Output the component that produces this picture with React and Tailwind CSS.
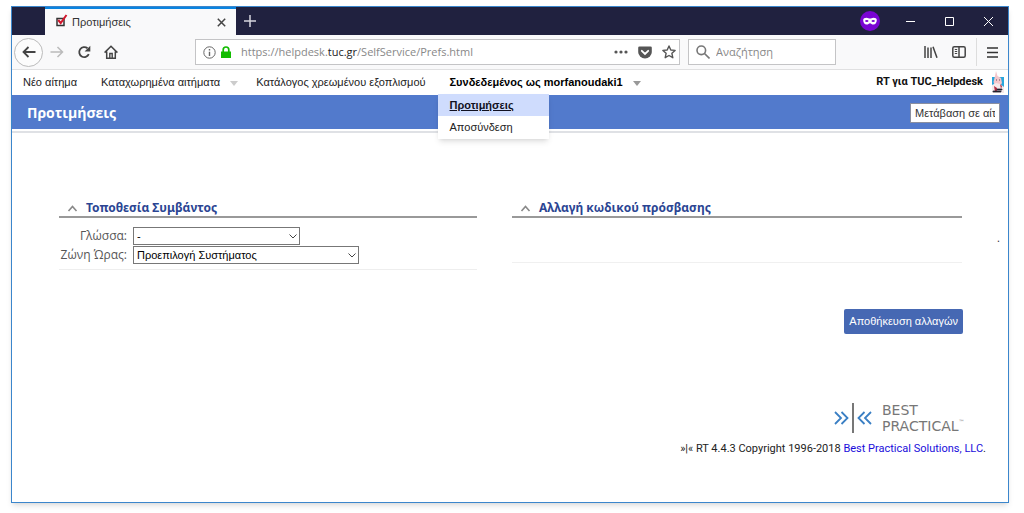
import React, { useState } from "react";

function NavItem({ children, arrow, bold }) {
  return (
    <a
      href="#"
      className={
        bold
          ? "flex items-center gap-2.5 font-bold text-black"
          : "flex items-center gap-2.5 text-[#222]"
      }
    >
      {children}
      {arrow && (
        <svg
          viewBox="0 0 8 5"
          className={bold ? "mt-0.5 h-[5px] w-2 fill-[#999]" : "mt-0.5 h-[5px] w-2 fill-[#ccc]"}
        >
          <path d="M0 0h8L4 5z" />
        </svg>
      )}
    </a>
  );
}

function Panel({ title, children, className }) {
  return (
    <section className={className}>
      <h2 className="flex h-[18px] items-center gap-2 border-b-2 border-[#999] pl-2 font-['Noto_Sans'] text-xs font-bold text-[#2b4593]">
        <svg viewBox="0 0 11 7" className="h-[7px] w-[11px]" fill="none" stroke="#888" strokeWidth="1.600">
          <path d="M1.500 6l4-4.500 4 4.500" />
        </svg>
        {title}
      </h2>
      {children}
    </section>
  );
}

function SelectRow({ id, label, option, width }) {
  return (
    <div className="flex h-[19px] items-center gap-1.5">
      <label
        htmlFor={id}
        className="w-[68px] text-right text-xs whitespace-nowrap text-[#555]"
      >
        {label}
      </label>
      <div className={`relative ${width}`}>
        <select
          id={id}
          className="block h-[18px] w-full appearance-none border border-[#777] bg-white pl-[3px] font-['Liberation_Sans'] text-[11px] leading-4 text-black"
        >
          <option>{option}</option>
        </select>
        <svg
          viewBox="0 0 8 5"
          className="pointer-events-none absolute top-[7px] right-[3px] h-[5px] w-2"
          fill="none"
          stroke="#444"
        >
          <path d="M.5.5L4 4 7.500.5" />
        </svg>
      </div>
    </div>
  );
}

function TabBar() {
  return (
    <div className="flex h-7 items-stretch bg-[#20213f] pl-[33px]">
      <div className="flex w-[191px] items-center border-t-2 border-[#0a84e0] bg-[#f9f9fa] pr-2.5 pl-2.5 font-['Liberation_Sans'] text-[11px] text-[#333]">
        <svg viewBox="0 0 13 13" className="mr-1 mb-1 h-[13px] w-[13px]" fill="none">
          <path d="M2 4.500h7v7H2z" stroke="#333" strokeWidth="1.500" />
          <path d="M3.200 6l2.500 3L11.500 1" stroke="#d2172d" strokeWidth="2" />
        </svg>
        <span className="flex-1">Προτιμήσεις</span>
        <button aria-label="Close tab">
          <svg viewBox="0 0 9 9" className="h-[9px] w-[9px]" stroke="#444" strokeWidth="1.500">
            <path d="M.8.8l7.400 7.400M8.200.8L.8 8.200" />
          </svg>
        </button>
      </div>
      <button aria-label="New tab" className="ml-2">
        <svg viewBox="0 0 12 12" className="h-3 w-3" stroke="#d5d5de" strokeWidth="1.500">
          <path d="M6 0v12M0 6h12" />
        </svg>
      </button>
      <div className="ml-auto flex items-center gap-[30px] pr-[15px]">
        <svg viewBox="0 0 20 20" className="-mr-1 h-5 w-5">
          <circle cx="10" cy="10" r="10" fill="#7a05d3" />
          <path
            d="M3.200 9c0-1.500 1.500-2.200 3.300-2.200 1.600 0 2.400.8 3.500.8s1.900-.8 3.500-.8c1.800 0 3.300.7 3.300 2.200 0 2.700-1.300 4.600-3.400 4.600-1.800 0-2.200-1.400-3.400-1.400s-1.600 1.400-3.400 1.400C4.500 13.600 3.200 11.700 3.200 9z"
            fill="#fff"
          />
          <ellipse cx="6.800" cy="10" rx="1.700" ry="1" fill="#7a05d3" />
          <ellipse cx="13.200" cy="10" rx="1.700" ry="1" fill="#7a05d3" />
        </svg>
        <button aria-label="Minimize">
          <svg viewBox="0 0 9 9" className="h-[9px] w-[9px]" stroke="#fff">
            <path d="M0 4.500h9" />
          </svg>
        </button>
        <button aria-label="Maximize">
          <svg viewBox="0 0 9 9" className="h-[9px] w-[9px]" stroke="#fff" fill="none">
            <path d="M.5.5h8v8h-8z" />
          </svg>
        </button>
        <button aria-label="Close">
          <svg viewBox="0 0 9 9" className="h-[9px] w-[9px]" stroke="#fff">
            <path d="M0 0l9 9M9 0L0 9" />
          </svg>
        </button>
      </div>
    </div>
  );
}

function Toolbar() {
  const [search, setSearch] = useState("");

  return (
    <div className="flex h-[35px] items-center border-b border-[#e0e0e1] bg-[#f9f9fa] pr-2.5 pl-0.5">
      <button
        aria-label="Back"
        className="flex h-[29px] w-[29px] items-center justify-center rounded-full border border-[#bbb] bg-[#fcfcfc]"
      >
        <svg viewBox="0 0 14 12" className="h-3 w-3.5" fill="none" stroke="#444" strokeWidth="1.800">
          <path d="M13.500 6H1.500M6.500 1l-5 5 5 5" />
        </svg>
      </button>
      <button aria-label="Forward" className="ml-[7px]">
        <svg viewBox="0 0 14 12" className="h-3 w-3.5" fill="none" stroke="#bbb" strokeWidth="1.500">
          <path d="M.5 6h12M7.500 1l5 5-5 5" />
        </svg>
      </button>
      <button aria-label="Reload" className="ml-[13px]">
        <svg viewBox="0 0 14 14" className="h-3.5 w-3.5" fill="none" stroke="#444" strokeWidth="1.800">
          <path d="M11.800 9.200A5 5 0 1 1 10.500 3.300" />
          <path d="M13.300.8v5.700H7.600z" fill="#444" stroke="none" />
        </svg>
      </button>
      <button aria-label="Home" className="ml-[13px]">
        <svg viewBox="0 0 14 14" className="h-3.5 w-3.5" fill="none" stroke="#444" strokeWidth="1.500">
          <path d="M.6 7.600L7 1.200l6.400 6.400M2.700 6.500v6.700h8.600V6.500" />
          <path d="M5.800 13V8.500h2.400V13" strokeWidth="1.400" />
        </svg>
      </button>
      <div className="ml-[77px] flex h-[26px] min-w-0 flex-1 items-center border border-[#c4c4c6] bg-white px-[7px]">
        <svg viewBox="0 0 13 13" className="h-[13px] w-[13px] shrink-0" fill="none" stroke="#666">
          <circle cx="6.500" cy="6.500" r="5.700" />
          <path d="M6.500 3v1.500M6.500 5.700V10" strokeWidth="1.400" />
        </svg>
        <svg viewBox="0 0 10 12" className="ml-[5px] h-3 w-2.5 shrink-0">
          <path d="M2.200 6V3.800a2.800 2.800 0 0 1 5.600 0V6" fill="none" stroke="#12bc00" strokeWidth="1.700" />
          <path d="M0 5.500h10V12H0z" fill="#12bc00" />
        </svg>
        <div className="ml-2.5 flex-1 text-[11px] whitespace-nowrap text-[#888]">
          https://helpdesk.<span className="text-[#222]">tuc.gr</span>/SelfService/Prefs.html
        </div>
        <button aria-label="Page actions">
          <svg viewBox="0 0 14 4" className="h-1 w-3.5" fill="#555">
            <circle cx="2" cy="2" r="1.600" />
            <circle cx="7" cy="2" r="1.600" />
            <circle cx="12" cy="2" r="1.600" />
          </svg>
        </button>
        <button aria-label="Save to Pocket" className="ml-2.5">
          <svg viewBox="0 0 14 13" className="h-[13px] w-3.5">
            <path d="M1.500.5h11q1.300 0 1.300 1.300V6a6.800 6.500 0 0 1-13.600 0V1.800Q.2.5 1.500.5z" fill="#555" />
            <path d="M3.800 4.800L7 7.900l3.200-3.100" fill="none" stroke="#fff" strokeWidth="1.800" strokeLinecap="round" />
          </svg>
        </button>
        <button aria-label="Bookmark" className="ml-2.5 -mr-1">
          <svg viewBox="0 0 14 14" className="h-3.5 w-3.5" fill="none" stroke="#555" strokeWidth="1.400" strokeLinejoin="round">
            <path d="M7 1l1.800 4 4.300.4-3.200 2.900.9 4.400L7 10.500l-3.800 2.200.9-4.400L.9 5.400 5.200 5z" />
          </svg>
        </button>
      </div>
      <div className="ml-2 flex h-[26px] w-[148px] items-center gap-1.5 border border-[#c4c4c6] bg-white pl-[7px]">
        <svg viewBox="0 0 14 14" className="h-3.5 w-3.5 shrink-0" fill="none" stroke="#777" strokeWidth="1.600">
          <circle cx="5.300" cy="5.300" r="4.300" />
          <path d="M8.500 8.500l5 5" />
        </svg>
        <input
          aria-label="Αναζήτηση"
          placeholder="Αναζήτηση"
          value={search}
          onChange={(e) => setSearch(e.target.value)}
          className="w-full min-w-0 text-[11px] outline-none placeholder:text-[#888]"
        />
      </div>
      <button aria-label="Library" className="ml-[88px]">
        <svg viewBox="0 0 14 12" className="h-3 w-3.5" stroke="#444" strokeWidth="1.500">
          <path d="M1 0v12M4 1.500V12M7 1.500V12M9 .8l4 11" />
        </svg>
      </button>
      <button aria-label="Sidebar" className="ml-3.5">
        <svg viewBox="0 0 14 12" className="h-3 w-3.5" fill="none" stroke="#444" strokeWidth="1.500">
          <rect x=".8" y=".8" width="12.400" height="10.400" rx="1.500" />
          <path d="M7 1v10" />
          <path d="M2.800 3.500h2.400M2.800 5.500h2.400M2.800 7.500h2.400" strokeWidth="1" />
        </svg>
      </button>
      <button aria-label="Menu" className="ml-2.5 h-7 border-l border-[#ddd] pl-2.5">
        <svg viewBox="0 0 11 11" className="h-[11px] w-[11px]" stroke="#333" strokeWidth="1.600">
          <path d="M0 1h11M0 5.500h11M0 10h11" />
        </svg>
      </button>
    </div>
  );
}

function Menu() {
  return (
    <nav className="flex h-[25px] items-center bg-white pl-[11px] font-['Liberation_Sans'] text-[11px] whitespace-nowrap">
      <div className="flex items-center">
        <NavItem>Νέο αίτημα</NavItem>
        <div className="ml-6">
          <NavItem arrow>Καταχωρημένα αιτήματα</NavItem>
        </div>
        <div className="ml-[18px]">
          <NavItem>Κατάλογος χρεωμένου εξοπλισμού</NavItem>
        </div>
        <div className="relative ml-6">
          <NavItem arrow bold>
            Συνδεδεμένος ως morfanoudaki1
          </NavItem>
          <div className="absolute top-full -left-3 z-10 mt-[3px] w-[111px] bg-white shadow-md">
            <a
              href="#"
              className="flex h-[22px] items-center bg-[#cfdcfd] pl-3 font-bold text-[#112] underline"
            >
              Προτιμήσεις
            </a>
            <a href="#" className="flex h-[23px] items-center pl-3 text-[#222]">
              Αποσύνδεση
            </a>
          </div>
        </div>
      </div>
      <div className="ml-auto flex items-center gap-2 pr-[3px] font-['Roboto'] font-bold text-[#111]">
        RT για TUC_Helpdesk
        <svg viewBox="0 0 14 23" className="h-[23px] w-3.5">
          <path d="M1 6h12v16H1z" fill="#29a6dc" />
          <path d="M4 5l1-5 1.500 5L10 7l1 5-2 3H4L2.500 11z" fill="#f3c6cb" />
          <path d="M1 14l4-2 4 1 4 3v6H1z" fill="#f5e9ea" />
          <path d="M3 15l3 2v4H4zM9 13l2 2-1 3z" fill="#b22c42" />
          <path d="M5 9h1M8 9h1M6 18h5v1H6zM2 20h8v1H2z" stroke="#334" strokeWidth=".8" />
        </svg>
      </div>
    </nav>
  );
}

function Logo() {
  return (
    <div className="flex h-8 items-center text-[#777]">
      <svg viewBox="0 0 38 30" className="mr-2.5 h-[30px] w-[38px]" fill="none">
        <path
          d="M1 9l6 6-6 6M7.500 9l6 6-6 6M30.500 9l-6 6 6 6M37 9l-6 6 6 6"
          stroke="#3a7fc4"
          strokeWidth="1.800"
        />
        <path d="M19 0v30" stroke="#777" strokeWidth="2" />
      </svg>
      <div className="w-[104px] font-['DejaVu_Sans'] text-sm leading-4">
        <div>BEST</div>
        <div className="flex">
          PRACTICAL<span className="text-[6px] leading-2">™</span>
        </div>
      </div>
    </div>
  );
}

export default function App() {
  return (
    <div className="flex min-h-screen flex-col bg-white pt-1.5 pr-[15px] pb-2.5 pl-[11px] font-['Open_Sans','Noto_Sans',sans-serif]">
      <div className="flex flex-1 flex-col border border-[#3b86cc] bg-white shadow-md">
        <TabBar />
        <Toolbar />
        <Menu />
        <header className="flex h-[34px] items-center justify-between bg-[#527acc] pt-0.5 pr-2 pl-[15px]">
          <h1 className="text-sm font-bold text-white">Προτιμήσεις</h1>
          <input
            aria-label="Μετάβαση σε αίτημα"
            defaultValue="Μετάβαση σε αίτημα"
            className="h-5 w-[90px] border border-[#8a8fa0] bg-white px-1 font-['Liberation_Sans'] text-[11px] text-[#333] outline-none"
          />
        </header>
        <div className="mt-0.5 h-0.5 bg-[#dfe1e5]" />

        <main className="pt-[67px] pl-[47px]">
          <div className="grid grid-cols-[418fr_450fr_11px] items-start gap-x-[35px]">
            <Panel title="Τοποθεσία Συμβάντος" className="border-b border-[#eee]">
              <div className="pt-2 pb-[5px]">
                <SelectRow id="lang" label="Γλώσσα:" option="-" width="w-[167px]" />
                <SelectRow
                  id="tz"
                  label="Ζώνη Ώρας:"
                  option="Προεπιλογή Συστήματος"
                  width="w-[226px]"
                />
              </div>
            </Panel>
            <Panel
              title="Αλλαγή κωδικού πρόσβασης"
              className="h-[63px] border-b border-[#f0f0f0]"
            />
            <span className="pt-8 text-[11px] leading-3 text-[#333]">.</span>
          </div>
          <div className="mt-[39px] flex justify-end pr-[45px]">
            <button className="h-[25px] rounded-xs bg-[#4668b3] px-[5px] font-['Liberation_Sans'] text-[11px] whitespace-nowrap text-white">
              Αποθήκευση αλλαγών
            </button>
          </div>
        </main>

        <footer className="mt-[68px] flex flex-col items-end pr-[22px] pb-5">
          <Logo />
          <p className="mt-1.5 font-['Roboto'] text-[11px] leading-[18px] text-[#222]">
            »|« RT 4.4.3 Copyright 1996-2018{" "}
            <a href="#" className="text-[#1a0ddb]">
              Best Practical Solutions, LLC
            </a>
            .
          </p>
        </footer>
      </div>
    </div>
  );
}
